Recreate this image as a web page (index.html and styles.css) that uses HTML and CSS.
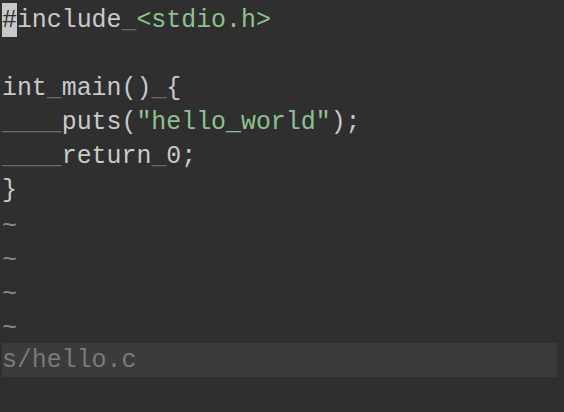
FILE: index.html
```html
<!DOCTYPE html>
<html>
<head>
<meta charset="utf-8">
<link rel="stylesheet" href="styles.css">
</head>
<body>
<div class="editor">
<div class="line"><span class="cursor">#</span>include<span class="ws">_</span><span class="str">&lt;stdio.h&gt;</span></div>
<div class="line"></div>
<div class="line">int<span class="ws">_</span>main()<span class="ws">_</span>{</div>
<div class="line"><span class="ws">____</span>puts(<span class="str">"hello<span class="ws">_</span>world"</span>);</div>
<div class="line"><span class="ws">____</span>return<span class="ws">_</span>0;</div>
<div class="line">}</div>
<div class="line tilde">~</div>
<div class="line tilde">~</div>
<div class="line tilde">~</div>
<div class="line tilde">~</div>
<div class="line status">s/hello.c</div>
</div>
</body>
</html>
```
FILE: styles.css
```css
html, body {
  margin: 0;
  padding: 0;
  background: #2f2f2f;
}
.editor {
  width: 555px;
  padding: 3px 0 0 2px;
  font-family: "Liberation Mono", "DejaVu Sans Mono", monospace;
  font-size: 24.9px;
  color: #c9c9c9;
}
.line {
  height: 34px;
  line-height: 34px;
  white-space: pre;
}
.cursor {
  display: inline-block;
  height: 34px;
  vertical-align: top;
  background: #c8c8c8;
  color: #2f2f2f;
}
.ws {
  color: #6a6a6a;
}
.str {
  color: #8cc28e;
}
.str .ws {
  color: #8cc28e;
}
.tilde {
  color: #8a8a8a;
  padding-top: 2px;
  height: 32px;
  line-height: 34px;
}
.status {
  background: #3b3b3b;
  color: #7a7a7a;
}
```
